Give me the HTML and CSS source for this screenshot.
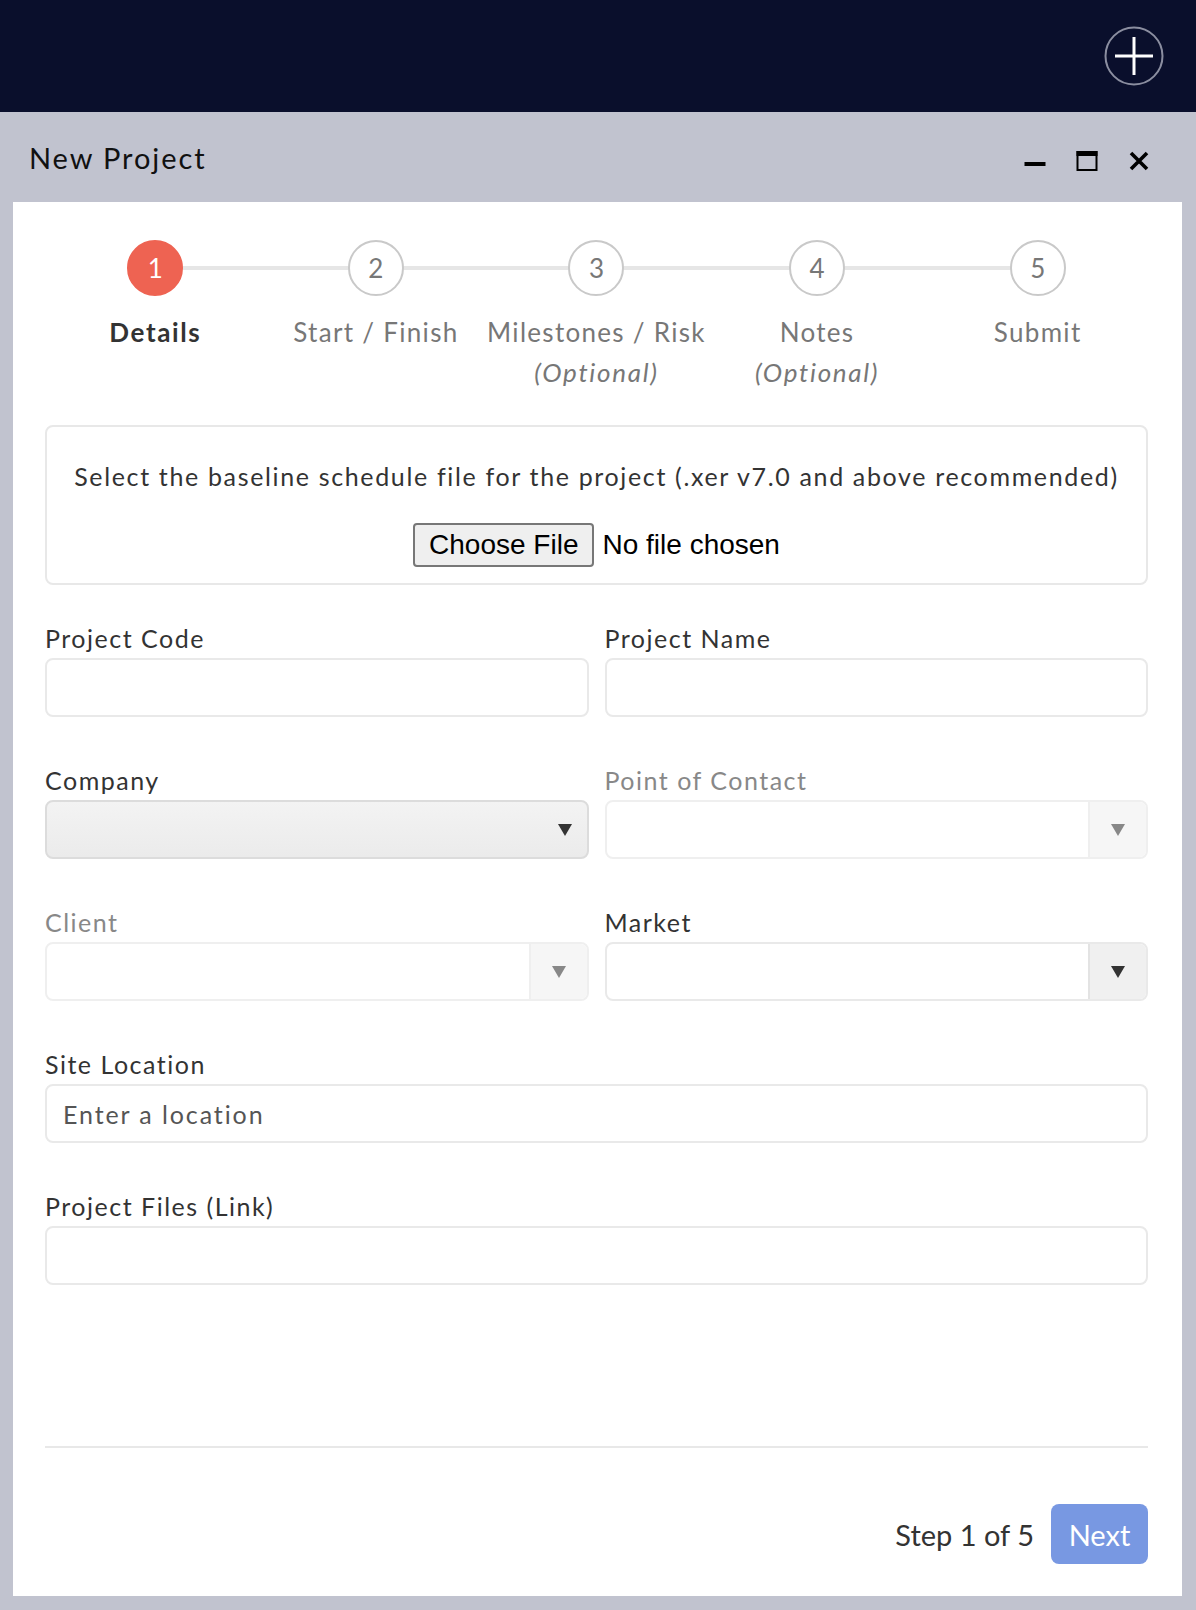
FILE: index.html
```html
<!DOCTYPE html>
<html lang="en">
<head>
<meta charset="utf-8">
<title>New Project</title>
<link rel="stylesheet" href="styles.css">
</head>
<body>
<header class="topbar">
  <button class="add-btn" aria-label="Add">
    <svg width="60" height="60" viewBox="0 0 60 60">
      <circle cx="30" cy="30" r="28.5" fill="none" stroke="#8b8ea0" stroke-width="2"/>
      <line x1="30" y1="11" x2="30" y2="49" stroke="#fff" stroke-width="3"/>
      <line x1="11" y1="30" x2="49" y2="30" stroke="#fff" stroke-width="3"/>
    </svg>
  </button>
</header>
<section class="modal">
  <div class="modal-head">
    <h1 class="modal-title">New Project</h1>
    <div class="win-controls">
      <svg class="win-icon" width="22" height="20" viewBox="0 0 22 20"><rect x="0.5" y="11" width="21" height="4" fill="#000"/></svg>
      <svg class="win-icon" width="22" height="20" viewBox="0 0 22 20"><rect x="1.5" y="1" width="19" height="18" fill="none" stroke="#000" stroke-width="2"/><rect x="0.5" y="0" width="21" height="5" fill="#000"/></svg>
      <svg class="win-icon" width="22" height="20" viewBox="0 0 22 20"><path d="M3 2 L19 18 M19 2 L3 18" stroke="#000" stroke-width="3.6" fill="none"/></svg>
    </div>
  </div>
  <div class="panel">
    <ol class="stepper">
      <li class="step active"><span class="step-num">1</span><span class="step-label">Details</span></li>
      <li class="step"><span class="step-num">2</span><span class="step-label">Start / Finish</span></li>
      <li class="step"><span class="step-num">3</span><span class="step-label">Milestones / Risk<br><em>(Optional)</em></span></li>
      <li class="step"><span class="step-num">4</span><span class="step-label">Notes<br><em>(Optional)</em></span></li>
      <li class="step last"><span class="step-num">5</span><span class="step-label">Submit</span></li>
    </ol>

    <div class="file-box">
      <p class="file-text">Select the baseline schedule file for the project (.xer v7.0 and above recommended)</p>
      <div class="file-row"><span class="file-btn">Choose File</span><span class="file-none">No file chosen</span></div>
    </div>

    <div class="form-grid">
      <div class="field">
        <label class="label">Project Code</label>
        <div class="input"></div>
      </div>
      <div class="field">
        <label class="label">Project Name</label>
        <div class="input"></div>
      </div>
      <div class="field">
        <label class="label">Company</label>
        <div class="select select-solid"><span class="tri tri-dark"></span></div>
      </div>
      <div class="field">
        <label class="label label-disabled">Point of Contact</label>
        <div class="select select-addon disabled"><span class="addon"><span class="tri tri-gray"></span></span></div>
      </div>
      <div class="field">
        <label class="label label-disabled">Client</label>
        <div class="select select-addon disabled"><span class="addon"><span class="tri tri-gray"></span></span></div>
      </div>
      <div class="field">
        <label class="label">Market</label>
        <div class="select select-addon"><span class="addon"><span class="tri tri-dark"></span></span></div>
      </div>
      <div class="field full">
        <label class="label">Site Location</label>
        <div class="input"><span class="placeholder">Enter a location</span></div>
      </div>
      <div class="field full">
        <label class="label">Project Files (Link)</label>
        <div class="input"></div>
      </div>
    </div>

    <footer class="panel-foot">
      <span class="step-count">Step 1 of 5</span>
      <button class="next-btn">Next</button>
    </footer>
  </div>
</section>
</body>
</html>
```

FILE: styles.css
```css
* { box-sizing: border-box; }
html, body { margin: 0; padding: 0; }
body {
  font-family: Lato, "Open Sans", sans-serif;
  color: #333;
  background: #c1c3cf;
  width: 1196px;
  height: 1610px;
  overflow: hidden;
}

.topbar {
  height: 112px;
  background: #0a0f2c;
  display: flex;
  align-items: center;
  justify-content: flex-end;
  padding-right: 32px;
}
.add-btn {
  width: 60px;
  height: 60px;
  padding: 0;
  border: 0;
  background: transparent;
  display: block;
}
.add-btn svg { display: block; }

.modal {
  background: #c1c3cf;
  padding: 0 14px 14px 13px;
}
.modal-head {
  height: 90px;
  display: flex;
  align-items: center;
  justify-content: space-between;
  padding: 0 32px 0 16px;
}
.modal-title {
  margin: 0;
  font-size: 29px;
  font-weight: 400;
  letter-spacing: 1.9px;
  color: #111;
  padding-top: 0;
}
.win-controls {
  display: flex;
  gap: 30px;
  align-items: center;
  padding-top: 8px;
}
.win-icon { display: block; }

.panel {
  background: #fff;
  height: 1394px;
  padding: 38px 34px 32px 32px;
  display: flex;
  flex-direction: column;
}

/* Stepper */
.stepper {
  list-style: none;
  margin: 0;
  padding: 0;
  display: grid;
  grid-template-columns: repeat(5, 1fr);
}
.step {
  position: relative;
  display: flex;
  flex-direction: column;
  align-items: center;
}
.step::after {
  content: "";
  position: absolute;
  top: 26px;
  left: 50%;
  width: 100%;
  height: 4px;
  background: #e6e6e6;
  z-index: 0;
}
.step.last::after { display: none; }
.step-num {
  position: relative;
  z-index: 1;
  width: 56px;
  height: 56px;
  border-radius: 50%;
  border: 2px solid #c9c9c9;
  background: #fff;
  color: #777;
  font-size: 26px;
  display: flex;
  align-items: center;
  justify-content: center;
}
.step.active .step-num {
  background: #ee6352;
  border-color: #ee6352;
  color: #fff;
}
.step-label {
  margin-top: 16px;
  font-size: 26px;
  line-height: 40px;
  letter-spacing: 1.3px;
  color: #777;
  text-align: center;
  white-space: nowrap;
}
.step-label em { font-style: italic; letter-spacing: 1.7px; }
.step.active .step-label { color: #333; font-weight: 700; letter-spacing: 1.6px; }

/* File box */
.file-box {
  margin-top: 33px;
  height: 160px;
  border: 2px solid #e8e8e8;
  border-radius: 8px;
  display: flex;
  flex-direction: column;
  align-items: center;
  padding-top: 31px;
}
.file-text {
  margin: 0;
  font-size: 25px;
  line-height: 36px;
  letter-spacing: 1.65px;
  color: #333;
}
.file-row {
  margin-top: 29px;
  display: flex;
  align-items: center;
  font-family: "Liberation Sans", Arial, sans-serif;
  font-size: 28px;
  color: #000;
}
.file-btn {
  height: 44px;
  padding: 0 14px;
  border: 2px solid #777;
  border-radius: 4px;
  background: #efefef;
  display: flex;
  align-items: center;
  margin-right: 8px;
}

/* Form */
.form-grid {
  margin-top: 32px;
  display: grid;
  grid-template-columns: 1fr 1fr;
  column-gap: 16px;
  row-gap: 42px;
}
.field.full { grid-column: 1 / -1; }
.label {
  display: block;
  font-size: 25px;
  line-height: 36px;
  letter-spacing: 1.5px;
  padding-top: 3px;
  margin-bottom: 2px;
  color: #333;
}
.label-disabled { color: #888; }
.input, .select {
  height: 59px;
  border: 2px solid #e9e9e9;
  border-radius: 8px;
  background: #fff;
  display: flex;
  align-items: center;
}
.placeholder {
  padding-left: 16px;
  font-size: 25px;
  letter-spacing: 1.9px;
  color: #555;
}
.select-solid {
  background: linear-gradient(#f3f3f3, #ebebeb);
  border-color: #dcdcdc;
  justify-content: flex-end;
  padding-right: 15px;
}
.select-addon {
  justify-content: flex-end;
  overflow: hidden;
}
.select-addon.disabled { border-color: #efefef; }
.addon {
  width: 58px;
  height: 100%;
  border-left: 2px solid #e3e3e3;
  background: #f0f0f0;
  display: flex;
  align-items: center;
  justify-content: center;
}
.select-addon.disabled .addon {
  background: #f6f6f6;
  border-left-color: #efefef;
}
.tri {
  width: 0;
  height: 0;
  border-left: 7px solid transparent;
  border-right: 7px solid transparent;
  border-top: 12px solid #333;
}
.tri-gray { border-top-color: #888; }

/* Footer */
.panel-foot {
  margin-top: auto;
  border-top: 2px solid #e8e8e8;
  padding-top: 56px;
  display: flex;
  justify-content: flex-end;
  align-items: center;
  gap: 17px;
}
.step-count {
  font-size: 29px;
  color: #333;
}
.next-btn {
  height: 60px;
  width: 97px;
  border: 0;
  border-radius: 8px;
  background: #7898e2;
  color: #fff;
  font-family: inherit;
  font-size: 29px;
  padding: 0;
}
```
